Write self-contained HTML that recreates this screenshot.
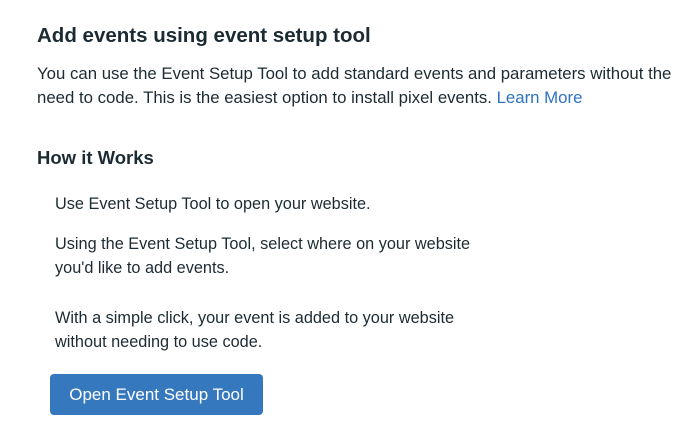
<!DOCTYPE html>
<html><head><style>
body{margin:0;width:700px;height:421px;background:#fff;font-family:"Liberation Sans",sans-serif;color:#1c2b33;position:relative;overflow:hidden}
.a{position:absolute;white-space:nowrap}
h1{position:absolute;left:37px;top:24px;margin:0;font-size:20.5px;font-weight:bold;color:#1c2b33}
.p{font-size:16.8px;line-height:24px}
.s{font-size:16.3px;line-height:24px}
.btn{position:absolute;left:50px;top:374px;width:213px;height:41px;background:#3578bd;border-radius:4px;color:#fff;font-size:17px;text-align:center;line-height:41px}
</style></head><body>
<h1>Add events using event setup tool</h1>
<div class="a p" style="left:37px;top:62px">You can use the Event Setup Tool to add standard events and parameters without the<br>need to code. This is the easiest option to install pixel events. <span style="color:#2d73c1">Learn More</span></div>
<div class="a" style="left:37px;top:147px;font-size:18.5px;font-weight:bold">How it Works</div>
<div class="a s" style="left:55px;top:192px">Use Event Setup Tool to open your website.</div>
<div class="a s" style="left:55px;top:232px">Using the Event Setup Tool, select where on your website<br>you'd like to add events.</div>
<div class="a s" style="left:55px;top:306px">With a simple click, your event is added to your website<br>without needing to use code.</div>
<div class="btn">Open Event Setup Tool</div>
</body></html>
